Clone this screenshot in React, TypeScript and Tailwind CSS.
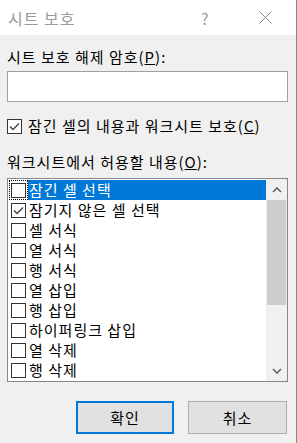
import React from 'react'

const font = { fontFamily: '"Noto Sans CJK KR", "Noto Sans", sans-serif' }

const items = [
  { label: '잠긴 셀 선택', checked: false },
  { label: '잠기지 않은 셀 선택', checked: true },
  { label: '셀 서식', checked: false },
  { label: '열 서식', checked: false },
  { label: '행 서식', checked: false },
  { label: '열 삽입', checked: false },
  { label: '행 삽입', checked: false },
  { label: '하이퍼링크 삽입', checked: false },
  { label: '열 삭제', checked: false },
  { label: '행 삭제', checked: false },
]

function Box({ checked }: { checked: boolean }) {
  return (
    <div className="w-[15px] h-[15px] border border-[#333333] bg-white flex items-center justify-center shrink-0">
      {checked ? (
        <svg width="11" height="9" viewBox="0 0 11 9">
          <path d="M1 4.5 L4 7.5 L10 1.5" stroke="#444" strokeWidth="1.3" fill="none" />
        </svg>
      ) : null}
    </div>
  )
}

export default function App() {
  return (
    <div className="w-[297px] h-[443px] bg-[#f0f0f0] border-r border-[#8a8a8a] text-[15px] leading-[20px] tracking-[1px] text-black" style={font}>
      <div className="h-[35px] bg-white flex items-center pl-[8px] text-[#9a9a9a] text-[16px]">
        <span className="flex-1">시트 보호</span>
        <span className="w-[14px] text-[16px] mr-[44px]">?</span>
        <svg width="13" height="13" viewBox="0 0 13 13" className="mr-[24px]">
          <path d="M0.5 0.5 L12.5 12.5 M12.5 0.5 L0.5 12.5" stroke="#8a8a8a" strokeWidth="1" />
        </svg>
      </div>

      <div className="px-[7px]">
        <div className="mt-[12px]">
          시트 보호 해제 암호(<span className="underline">P</span>):
        </div>
        <div className="mt-[4px] h-[31px] w-[281px] bg-white border border-[#a0a0a0]"></div>

        <div className="mt-[14px] flex items-center gap-[6px]">
          <Box checked={true} />
          <span>
            잠긴 셀의 내용과 워크시트 보호(<span className="underline">C</span>)
          </span>
        </div>

        <div className="mt-[16px]">
          워크시트에서 허용할 내용(<span className="underline">O</span>):
        </div>

        <div className="mt-[6px] w-[281px] h-[204px] bg-white border border-[#828790] flex">
          <div className="w-[258px] pt-[1px]">
            {items.map((it, i) => (
              <div key={it.label} className="h-[20px] flex items-center">
                <div
                  className={
                    i === 0
                      ? 'ml-[1px] w-[19px] h-[20px] border border-dotted border-black flex items-center justify-center'
                      : 'ml-[1px] w-[19px] h-[20px] flex items-center justify-center'
                  }
                >
                  <Box checked={it.checked} />
                </div>
                <div
                  className={
                    i === 0
                      ? 'flex-1 h-[20px] bg-[#0078d7] text-white pl-[1px]'
                      : 'flex-1 h-[20px] pl-[1px]'
                  }
                >
                  {it.label}
                </div>
              </div>
            ))}
          </div>
          <div className="w-[21px] bg-[#f0f0f0] flex flex-col">
            <div className="h-[21px] flex items-center justify-center">
              <svg width="10" height="6" viewBox="0 0 10 6">
                <path d="M1 5 L5 1 L9 5" stroke="#606060" strokeWidth="1.6" fill="none" />
              </svg>
            </div>
            <div className="mx-[1px] h-[105px] bg-[#cdcdcd]"></div>
            <div className="flex-1"></div>
            <div className="h-[21px] flex items-center justify-center">
              <svg width="10" height="6" viewBox="0 0 10 6">
                <path d="M1 1 L5 5 L9 1" stroke="#606060" strokeWidth="1.6" fill="none" />
              </svg>
            </div>
          </div>
        </div>

        <div className="mt-[19px] flex justify-end gap-[14px] pr-[2px]">
          <button className="w-[98px] h-[33px] bg-[#e1e1e1] border-2 border-[#0078d7] flex items-center justify-center">
            확인
          </button>
          <button className="w-[99px] h-[33px] bg-[#e1e1e1] border border-[#adadad] flex items-center justify-center">
            취소
          </button>
        </div>
      </div>
    </div>
  )
}
